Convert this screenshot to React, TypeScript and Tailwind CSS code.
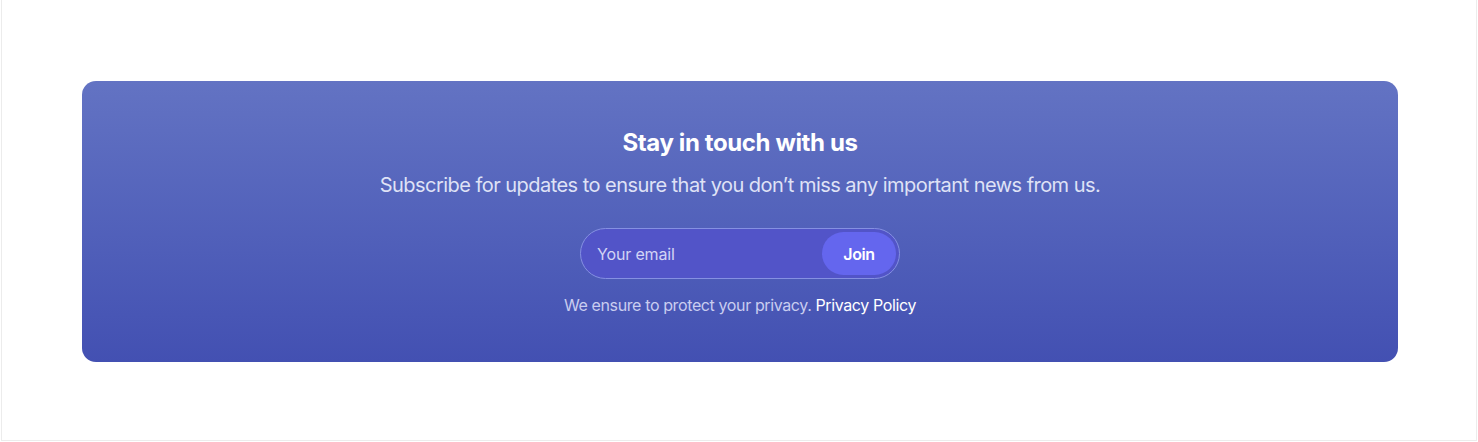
export default function App() {
  return (
    <div className="min-h-[442px] bg-white" style={{ fontFamily: 'Inter, "Noto Sans", sans-serif' }}>
      <div className="mx-px h-[441px] border-x border-b border-[#ececec] pl-20 pr-[78px] pt-[81px]">
        {/* Newsletter card */}
        <div className="flex flex-col items-center rounded-[14px] bg-gradient-to-b from-[#6373c3] to-[#4350b2] pt-[46px] pb-[45px] tracking-[-0.024em]">
          <h2 className="text-2xl font-bold leading-8 text-white">Stay in touch with us</h2>
          <p className="mt-3 text-xl leading-7 tracking-[-0.027em] text-[#dfe2f6]">
            Subscribe for updates to ensure that you don’t miss any important news from us.
          </p>
          <form
            className="mt-[29px] flex h-[51px] w-[320px] items-center rounded-full border border-[#8590e2] bg-[#5254c8] pl-4 pr-[3px]"
            onSubmit={(e) => e.preventDefault()}
          >
            <input
              type="email"
              placeholder="Your email"
              className="min-w-0 flex-1 bg-transparent text-base tracking-[-0.01em] text-white outline-none placeholder:text-[#d3d5f5]"
            />
            <button
              type="submit"
              className="h-[43px] w-[74px] rounded-full bg-[#6466ee] text-base font-semibold text-white"
            >
              Join
            </button>
          </form>
          <p className="mt-[14px] text-base leading-6 text-[#c9cdf0]">
            We ensure to protect your privacy. <a href="#" className="text-white">Privacy Policy</a>
          </p>
        </div>
      </div>
    </div>
  );
}
